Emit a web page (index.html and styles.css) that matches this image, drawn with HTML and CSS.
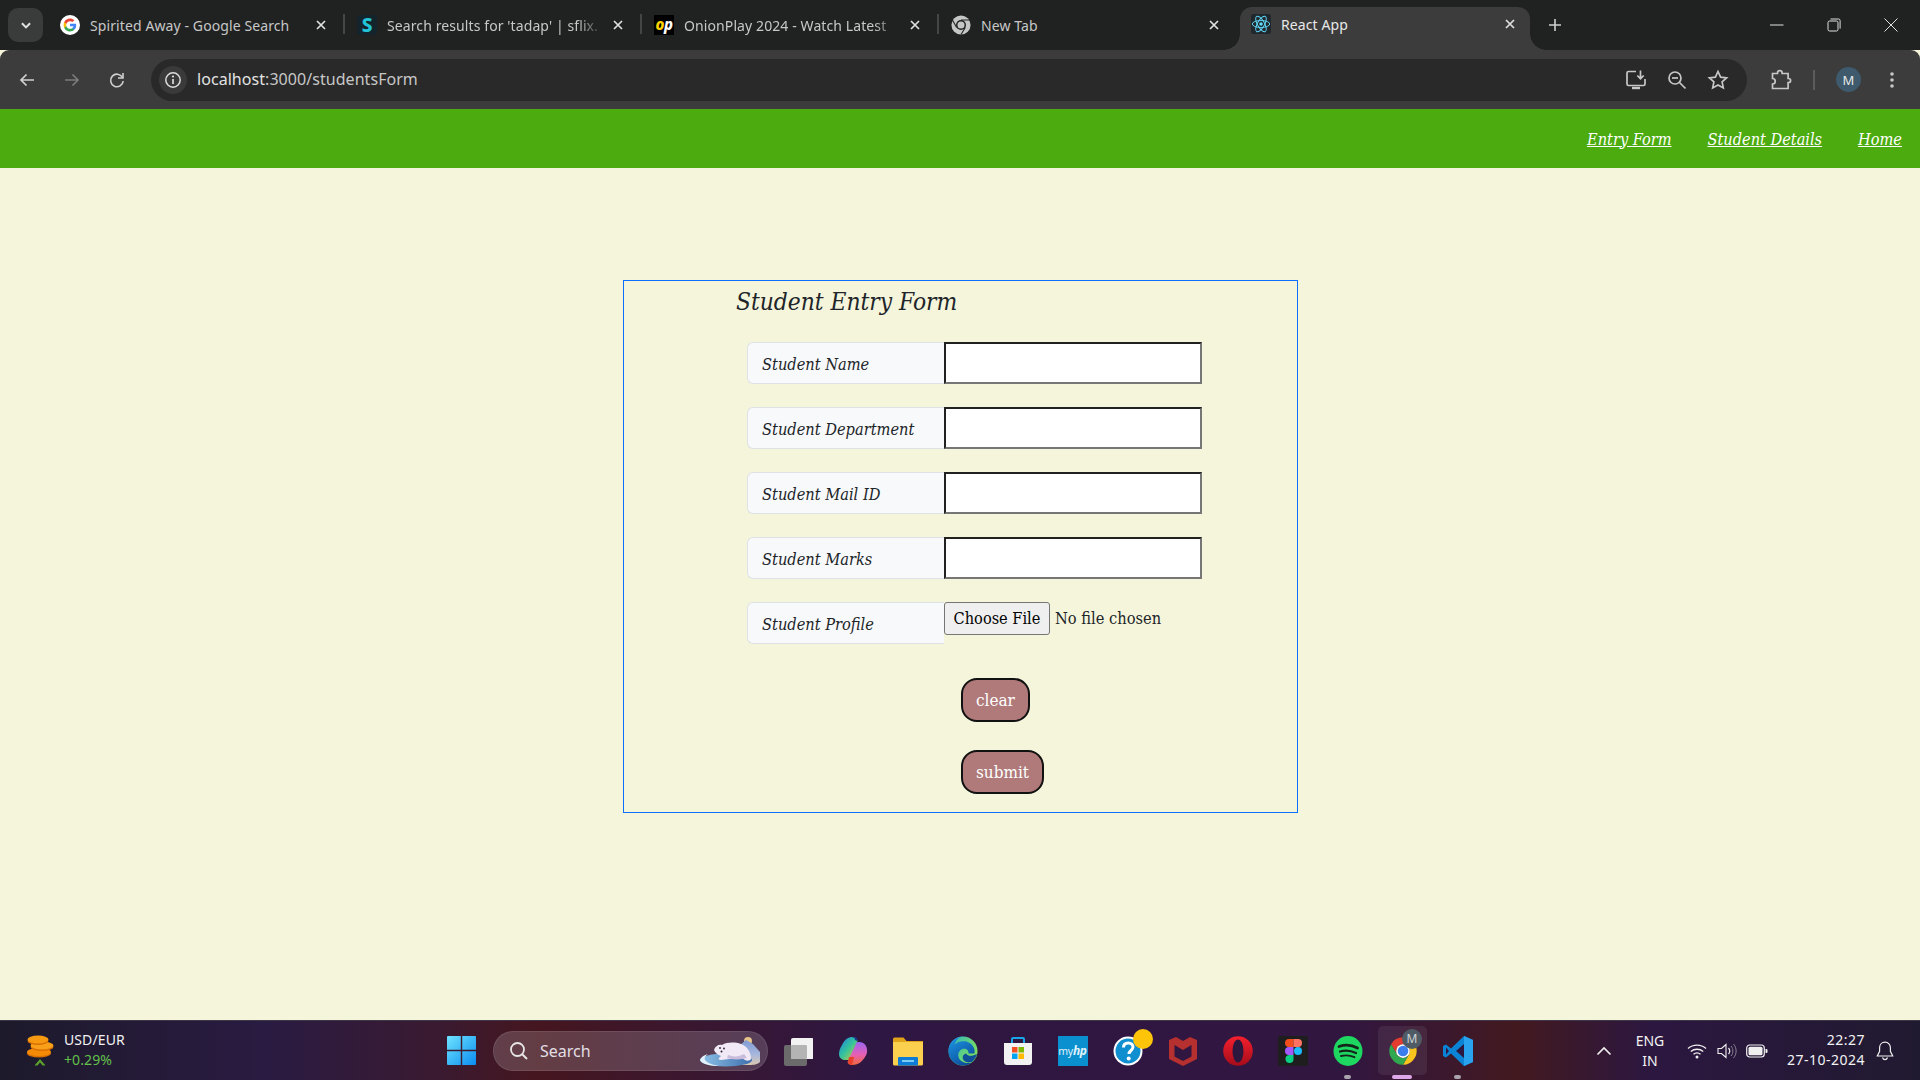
FILE: index.html
```html
<!DOCTYPE html>
<html lang="en">
<head>
<meta charset="utf-8">
<title>React App</title>
<link rel="stylesheet" href="styles.css">
</head>
<body>
<div class="screen">
  <header class="tabstrip">
    <div class="tab-menu"><svg class="ico12" viewBox="0 0 12 12"><path d="M2.500 4.500 6 8l3.500-3.500" fill="none" stroke="#e3e3e3" stroke-width="1.700"/></svg></div>
    <div class="tab tab-sep">
      <svg class="fav" viewBox="0 0 24 24"><circle cx="12" cy="12" r="12" fill="#fff"/><g transform="translate(3.600 3.600) scale(.7)"><path fill="#4285F4" d="M22.560 12.250c0-.78-.07-1.530-.2-2.250H12v4.260h5.920c-.26 1.370-1.040 2.530-2.210 3.310v2.770h3.570c2.080-1.920 3.280-4.740 3.280-8.090z"/><path fill="#34A853" d="M12 23c2.970 0 5.460-.98 7.280-2.660l-3.570-2.770c-.98.66-2.230 1.060-3.710 1.060-2.860 0-5.290-1.930-6.160-4.530H2.180v2.840C3.990 20.530 7.700 23 12 23z"/><path fill="#FBBC05" d="M5.840 14.090c-.22-.66-.35-1.360-.35-2.090s.13-1.430.35-2.090V7.070H2.180C1.430 8.550 1 10.220 1 12s.43 3.450 1.180 4.930l2.850-2.220.81-.62z"/><path fill="#EA4335" d="M12 5.380c1.620 0 3.060.56 4.210 1.640l3.150-3.150C17.450 2.090 14.970 1 12 1 7.700 1 3.990 3.470 2.180 7.070l3.660 2.840c.87-2.600 3.300-4.530 6.160-4.530z"/></g></svg>
      <span class="tab-title">Spirited Away - Google Search</span>
      <svg class="tab-x" viewBox="0 0 12 12"><path d="M2 2l8 8M10 2l-8 8"/></svg>
    </div>
    <div class="tab tab-sep">
      <span class="fav fav-s">S</span>
      <span class="tab-title tab-fade">Search results for 'tadap' | sflix.t</span>
      <svg class="tab-x" viewBox="0 0 12 12"><path d="M2 2l8 8M10 2l-8 8"/></svg>
    </div>
    <div class="tab tab-sep">
      <span class="fav fav-op">o<span class="fav-op-p">p</span></span>
      <span class="tab-title tab-fade">OnionPlay 2024 - Watch Latest</span>
      <svg class="tab-x" viewBox="0 0 12 12"><path d="M2 2l8 8M10 2l-8 8"/></svg>
    </div>
    <div class="tab tab-last">
      <svg class="fav" viewBox="0 0 48 48"><circle cx="24" cy="24" r="23" fill="#c4c7c5"/><circle cx="24" cy="24" r="12" fill="#202222"/><circle cx="24" cy="24" r="8.500" fill="#c4c7c5"/><path d="M24 12h21M13.600 30 3 11.600M34.400 30 24 47" stroke="#202222" stroke-width="2.600"/></svg>
      <span class="tab-title">New Tab</span>
      <svg class="tab-x" viewBox="0 0 12 12"><path d="M2 2l8 8M10 2l-8 8"/></svg>
    </div>
    <div class="tab tab-active">
      <svg class="fav" viewBox="0 0 24 24"><rect width="24" height="24" rx="3" fill="#20282d"/><g fill="none" stroke="#61dafb" stroke-width="1.100"><ellipse cx="12" cy="12" rx="10.500" ry="4.200"/><ellipse cx="12" cy="12" rx="10.500" ry="4.200" transform="rotate(60 12 12)"/><ellipse cx="12" cy="12" rx="10.500" ry="4.200" transform="rotate(120 12 12)"/></g><circle cx="12" cy="12" r="2.100" fill="#61dafb"/></svg>
      <span class="tab-title">React App</span>
      <svg class="tab-x" viewBox="0 0 12 12"><path d="M2 2l8 8M10 2l-8 8"/></svg>
    </div>
    <svg class="new-tab" viewBox="0 0 14 14"><path d="M7 1v12M1 7h12" fill="none" stroke="#d0d0d0" stroke-width="1.600"/></svg>
    <div class="win-controls">
      <svg class="win-btn" viewBox="0 0 14 14"><path d="M0 7h13.500" stroke="#e0e0e0" stroke-width="1"/></svg>
      <svg class="win-btn" viewBox="0 0 14 14"><rect x="1" y="3" width="10" height="10" rx="1.600" fill="none" stroke="#e0e0e0"/><path d="M3.500 1h8a1.600 1.600 0 0 1 1.600 1.600v8" fill="none" stroke="#e0e0e0"/></svg>
      <svg class="win-btn" viewBox="0 0 14 14"><path d="M.5.5l13 13M13.500.5l-13 13" stroke="#e0e0e0" stroke-width="1"/></svg>
    </div>
  </header>

  <div class="toolbar">
    <svg class="tool-btn" viewBox="0 0 18 18"><path d="M16 9H3M8.500 3.500 3 9l5.500 5.500" fill="none" stroke="#d0d0d0" stroke-width="1.700"/></svg>
    <svg class="tool-btn" viewBox="0 0 18 18"><path d="M2 9h13M9.500 3.500 15 9l-5.500 5.500" fill="none" stroke="#7b7b7b" stroke-width="1.700"/></svg>
    <svg class="tool-btn" viewBox="0 0 18 18"><path d="M14.500 6.500A6.300 6.300 0 1 0 15.200 10" fill="none" stroke="#d0d0d0" stroke-width="1.600"/><path d="M15 2v5h-5" fill="none" stroke="#d0d0d0" stroke-width="1.600"/></svg>
    <div class="omnibox">
      <span class="info-chip"><svg class="ico18" viewBox="0 0 18 18"><circle cx="9" cy="9" r="7.200" fill="none" stroke="#dcdcdc" stroke-width="1.500"/><path d="M9 8v5" stroke="#dcdcdc" stroke-width="1.700"/><circle cx="9" cy="5.500" r="1.100" fill="#dcdcdc"/></svg></span>
      <span class="url">localhost<span class="url-rest">:3000/studentsForm</span></span>
      <svg class="omni-ico" viewBox="0 0 22 22"><path d="M11 2.500H3.500A1.500 1.500 0 0 0 2 4v11a1.500 1.500 0 0 0 1.500 1.500h15A1.500 1.500 0 0 0 20 15v-5" fill="none" stroke="#c7c7c7" stroke-width="1.700"/><path d="M15.500 1.500v8M12.300 6.500l3.200 3.200 3.200-3.200" fill="none" stroke="#c7c7c7" stroke-width="1.700"/><path d="M7 19h8" stroke="#c7c7c7" stroke-width="2.400"/></svg>
      <svg class="omni-ico" viewBox="0 0 22 22"><circle cx="9" cy="9" r="6" fill="none" stroke="#c7c7c7" stroke-width="1.700"/><path d="M13.500 13.500 19.500 19.500" stroke="#c7c7c7" stroke-width="1.700"/><path d="M6 9h6" stroke="#c7c7c7" stroke-width="1.700"/></svg>
      <svg class="omni-ico" viewBox="0 0 22 22"><path d="M11 2.500l2.600 5.600 6 .7-4.500 4.100 1.200 6L11 16l-5.300 2.900 1.200-6L2.400 8.800l6-.7z" fill="none" stroke="#c7c7c7" stroke-width="1.700"/></svg>
    </div>
    <svg class="ext-ico" viewBox="0 0 22 22"><path d="M2.500 4.500h5v-.5a2.300 2.300 0 0 1 4.600 0v.5h6v5h.5a2 2 0 0 1 0 4h-.5v6H2.500v-4.500a2.700 2.700 0 0 0 0-5.500z" fill="none" stroke="#c7c7c7" stroke-width="1.700"/></svg>
    <span class="tool-sep"></span>
    <span class="avatar">M</span>
    <svg class="menu-ico" viewBox="0 0 6 18"><circle cx="3" cy="3" r="1.800" fill="#c7c7c7"/><circle cx="3" cy="9" r="1.800" fill="#c7c7c7"/><circle cx="3" cy="15" r="1.800" fill="#c7c7c7"/></svg>
  </div>

  <nav class="navbar">
    <a class="nav-link" href="#">Entry Form</a>
    <a class="nav-link" href="#">Student Details</a>
    <a class="nav-link" href="#">Home</a>
  </nav>

  <main class="page">
    <form class="entry-form">
      <h2 class="form-title">Student Entry Form</h2>
      <div class="field"><label class="field-label">Student Name</label><input class="field-input" type="text"></div>
      <div class="field"><label class="field-label">Student Department</label><input class="field-input" type="text"></div>
      <div class="field"><label class="field-label">Student Mail ID</label><input class="field-input" type="text"></div>
      <div class="field"><label class="field-label">Student Marks</label><input class="field-input" type="text"></div>
      <div class="field field-file"><label class="field-label">Student Profile</label><input class="file-input" type="file"></div>
      <div class="actions">
        <button class="action-btn" type="button">clear</button>
        <button class="action-btn" type="button">submit</button>
      </div>
    </form>
  </main>

  <footer class="taskbar">
    <div class="widget">
      <svg class="coins" viewBox="0 0 28 32">
        <ellipse cx="13" cy="18.500" rx="12" ry="4" fill="#d96f00"/><ellipse cx="13" cy="17" rx="12" ry="4" fill="#f58a07"/>
        <ellipse cx="16" cy="12" rx="11.500" ry="4" fill="#d96f00"/><ellipse cx="16" cy="10.500" rx="11.500" ry="4" fill="#f9a01b"/>
        <ellipse cx="12" cy="6" rx="10.500" ry="4" fill="#d96f00"/><ellipse cx="12" cy="4.500" rx="10.500" ry="4" fill="#f79a12"/>
        <path d="M14 24l5.500 6.500h-3L14 27.500l-2.500 3h-3z" fill="#5aa02c"/>
      </svg>
      <div class="widget-text"><span>USD/EUR</span><span class="widget-up">+0.29%</span></div>
    </div>
    <svg class="start" viewBox="0 0 29 29">
      <defs><linearGradient id="win" x1="0" y1="0" x2="1" y2="1"><stop offset="0" stop-color="#6fe3ff"/><stop offset="1" stop-color="#0a8cf0"/></linearGradient></defs>
      <path d="M1 0h12.800v13.800H0V1a1 1 0 0 1 1-1zM15.200 0H28a1 1 0 0 1 1 1v12.800H15.200zM0 15.200h13.800V29H1a1 1 0 0 1-1-1zM15.200 15.200H29V28a1 1 0 0 1-1 1H15.200z" fill="url(#win)"/>
    </svg>
    <div class="search">
      <svg class="search-ico" viewBox="0 0 20 20"><circle cx="8.500" cy="8.500" r="6.500" fill="none" stroke="#e6e6e6" stroke-width="1.800"/><path d="M13 13l5 5" stroke="#e6e6e6" stroke-width="1.900"/></svg>
      <span class="search-text">Search</span>
      <svg class="bear" viewBox="0 0 66 34">
        <defs><linearGradient id="mt" x1="0" y1="0" x2="0" y2="1"><stop offset="0" stop-color="#7f9ad6"/><stop offset=".6" stop-color="#a9b8dc"/><stop offset="1" stop-color="#dcc8b0"/></linearGradient><linearGradient id="wa" x1="0" y1="0" x2="1" y2="0"><stop offset="0" stop-color="#8fc3e8"/><stop offset="1" stop-color="#3d6fae"/></linearGradient></defs>
        <circle cx="50" cy="7" r="4" fill="#e6c48c"/>
        <path d="M30 22l7-13 5 2 6-5 7 4 7 8v10c-3 3-8 3-12 3H36z" fill="url(#mt)"/>
        <ellipse cx="28" cy="26" rx="26" ry="6.500" fill="url(#wa)"/>
        <path d="M2 26c1-3 4-5 8-6-3 2-4 4-3 6 2 3 8 5 14 6-9 0-17-2-19-6z" fill="#e3f1fa"/>
        <path d="M16 16c1-4 5-6 8-5 5-3 13-3 19-1 6 2 10 8 10 15-1 2-4 2-6 1l-3-2c-4 1-9 1-13 1l-8 1c-2 0-3-1-2-2l2-2c-3-1-6-3-7-6z" fill="#f1e9f5"/>
        <path d="M30 21c5 2 11 2 16-1l3 4-5 1c-6 1-12 0-15-1z" fill="#c9bcdc"/>
        <circle cx="22" cy="14" r=".9" fill="#2a2230"/><circle cx="26" cy="14.500" r=".9" fill="#2a2230"/><circle cx="23.500" cy="17.500" r="1" fill="#2a2230"/>
      </svg>
    </div>
    <div class="apps">
      <div class="app"><svg class="app-ico" viewBox="0 0 30 30"><rect x="1" y="9" width="23" height="21" rx="2" fill="#6b6b6b"/><rect x="8" y="2" width="23" height="21" rx="2" fill="#f2f2f2"/><rect x="8" y="9" width="16" height="14" rx="1" fill="#b4b4b4"/></svg></div>
      <div class="app"><svg class="app-ico" viewBox="0 0 30 30">
        <defs>
          <linearGradient id="cp1" x1="0" y1="0" x2="1" y2="1"><stop offset="0" stop-color="#1b7fe8"/><stop offset=".5" stop-color="#35c49a"/><stop offset="1" stop-color="#f2c72e"/></linearGradient>
          <linearGradient id="cp2" x1="0" y1="0" x2="0" y2="1"><stop offset="0" stop-color="#9a66f2"/><stop offset=".55" stop-color="#e65fb4"/><stop offset="1" stop-color="#f0683a"/></linearGradient>
        </defs>
        <path d="M14 1c3.500 0 5 1.500 5.500 4l-6 17-3.500 2H7c-3.500 0-6-2.500-6-6 0-3 1-6 3-9C6 5 9 1 14 1z" fill="url(#cp1)"/>
        <path d="M20 6c4 0 7 1 8.500 5 1 3 1 7-1.500 10-3 5-7 8-13 8-2.500 0-4-1-4.500-3l8-17c.5-2 1-3 2.500-3z" fill="url(#cp2)"/>
        <path d="M11 21h5l-2 8c-2 0-3.500-1-4-3z" fill="#e8402a"/>
        <path d="M19 5c1-2-1-4-5-4 2 .5 3 1.500 3 3z" fill="#123a9c"/>
      </svg></div>
      <div class="app"><svg class="app-ico" viewBox="0 0 30 30"><path d="M0 3a1.500 1.500 0 0 1 1.500-1.500h9l3 3.500H30V10H0z" fill="#e0a31a"/><path d="M0 6h30v22a1.500 1.500 0 0 1-1.500 1.500h-27A1.500 1.500 0 0 1 0 28z" fill="#fcd04f"/><rect x="5" y="21" width="20" height="8.500" rx="1" fill="#0d7cd6"/><rect x="9" y="24" width="12" height="2" fill="#7ccbf5"/></svg></div>
      <div class="app"><svg class="app-ico" viewBox="0 0 30 30">
        <defs><linearGradient id="edgeA" x1="0" y1="0" x2="1" y2=".6"><stop offset="0" stop-color="#2cb4c4"/><stop offset="1" stop-color="#7fe05a"/></linearGradient><linearGradient id="edgeB" x1="0" y1="0" x2=".6" y2="1"><stop offset="0" stop-color="#1d9ae6"/><stop offset="1" stop-color="#0c4f9e"/></linearGradient></defs>
        <circle cx="15" cy="15" r="14.500" fill="url(#edgeA)"/>
        <path d="M15 .5C6.500.5.500 7 .5 15c0 8 6.500 14.500 14.500 14.500 3.500 0 6.500-1 9-3-5 1.500-12 0-13.500-5.500-1-4 1-7 4-8 3-1 6.500 1 6 4.500h6c1-5-2-10-8-12-4-1-9 0-12 3 2-5 5-8 8.500-8.500z" fill="url(#edgeB)"/>
        <path d="M29 18c-.5 2-2 5-5 8-4 1-8 0-9-3-1-3 1-5 3-5.500 2 3 6 3 11 .5z" fill="#0f4f9a"/>
      </svg></div>
      <div class="app"><svg class="app-ico" viewBox="0 0 30 30"><path d="M9 7V3a1 1 0 0 1 1-1h10a1 1 0 0 1 1 1v4" fill="none" stroke="#1aa5e8" stroke-width="2"/><path d="M1 7h28v19a3 3 0 0 1-3 3H4a3 3 0 0 1-3-3z" fill="#f2f2f2"/><rect x="9" y="11" width="5.500" height="5.500" fill="#f25022"/><rect x="15.500" y="11" width="5.500" height="5.500" fill="#7fba00"/><rect x="9" y="17.500" width="5.500" height="5.500" fill="#00a4ef"/><rect x="15.500" y="17.500" width="5.500" height="5.500" fill="#ffb900"/></svg></div>
      <div class="app"><span class="myhp">my<i class="myhp-hp">hp</i></span></div>
      <div class="app"><svg class="app-ico" viewBox="0 0 30 30"><circle cx="15" cy="15" r="14.500" fill="#fff"/><circle cx="15" cy="15" r="12.500" fill="#0f8fd0"/><path d="M10.500 11.500c0-3 2-4.500 4.800-4.500s4.700 1.700 4.700 4c0 3.500-4 3.500-4 7" fill="none" stroke="#fff" stroke-width="3"/><circle cx="15.700" cy="22.500" r="2" fill="#fff"/></svg><span class="badge-dot"></span></div>
      <div class="app"><svg class="app-ico" viewBox="0 0 30 30"><path d="M1 4l7-3 7 4 7-4 7 3v19l-14 7-14-7zM6.500 9v11.500l8.500 4.500 8.500-4.500V9L15 14z" fill="#b5302e" fill-rule="evenodd"/></svg></div>
      <div class="app"><svg class="app-ico" viewBox="0 0 30 30"><defs><linearGradient id="op" x1="0" y1="0" x2="0" y2="1"><stop offset="0" stop-color="#f5202e"/><stop offset="1" stop-color="#a50c1a"/></linearGradient></defs><circle cx="15" cy="15" r="14.800" fill="url(#op)"/><ellipse cx="15" cy="15" rx="5.500" ry="11.500" fill="#2c173f"/></svg></div>
      <div class="app"><svg class="app-ico" viewBox="0 0 30 30"><rect width="30" height="30" rx="2" fill="#1e1e1e"/><path d="M11 3h4.500v8H11a4 4 0 0 1 0-8z" fill="#f24e1e"/><path d="M15.500 3H20a4 4 0 0 1 0 8h-4.500z" fill="#ff7262"/><circle cx="11" cy="15" r="4" fill="#a259ff"/><rect x="11" y="11" width="4.500" height="8" fill="#a259ff"/><circle cx="20" cy="15" r="4" fill="#1abcfe"/><path d="M11 19h4.500v4a4 4 0 1 1-4.500-4z" fill="#0acf83"/></svg></div>
      <div class="app"><svg class="app-ico" viewBox="0 0 30 30"><ellipse cx="15" cy="15" rx="14.500" ry="15" fill="#1ed760"/><g fill="none" stroke="#14251b" stroke-linecap="round"><path d="M6 10.500c6-2 13-1.500 18.500 1.500" stroke-width="2.800"/><path d="M7 15.500c5-1.500 11-1 16 1.500" stroke-width="2.300"/><path d="M8 20c4-1 9-.8 13.500 1.200" stroke-width="1.900"/></g></svg><span class="run-dot"></span></div>
      <div class="app app-active"><svg class="app-ico" viewBox="0 0 48 48"><path d="M24 2A22 22 0 0 0 5 13l9.500 16.500A11 11 0 0 1 24 13h19A22 22 0 0 0 24 2z" fill="#e33b2e"/><path d="M43 13H24a11 11 0 0 1 9.500 16.500L24 46a22 22 0 0 0 19-33z" fill="#f9c31d"/><path d="M5 13a22 22 0 0 0 19 33l9.500-16.500a11 11 0 0 1-19 0z" fill="#2fa84f"/><circle cx="24" cy="24" r="11" fill="#fff"/><circle cx="24" cy="24" r="8.500" fill="#3b7ded"/></svg><span class="profile-badge">M</span><span class="run-dot run-active"></span></div>
      <div class="app"><svg class="app-ico" viewBox="0 0 30 30"><path d="M21 0l9 4v22l-9 4L8 17.500 3 21.500 0 20V10l3-1.500 5 4z" fill="#0b84d6"/><path d="M21 0l9 4v22l-9 4z" fill="#2aa3ef"/><path d="M21 8l-8 7 8 7z" fill="#2c173f"/><path d="M3 11.500 6 15l-3 3.500z" fill="#2c173f"/></svg><span class="run-dot"></span></div>
    </div>
    <div class="tray">
      <svg class="tray-chevron" viewBox="0 0 16 10"><path d="M1.500 8.500 8 2l6.500 6.500" fill="none" stroke="#f0f0f0" stroke-width="1.600"/></svg>
      <div class="tray-lang"><span>ENG</span><span>IN</span></div>
      <svg class="tray-wifi" viewBox="0 0 20 16"><g fill="none" stroke="#f0f0f0" stroke-width="1.300"><path d="M1 5.500c5-4.500 13-4.500 18 0"/><path d="M3.800 8.500c3.500-3 9-3 12.400 0"/><path d="M6.500 11.300c2-1.700 5-1.700 7 0"/></g><circle cx="10" cy="14" r="1.500" fill="#f0f0f0"/></svg>
      <svg class="tray-vol" viewBox="0 0 20 16"><path d="M1 5.500h3.500L9 1.500v13l-4.500-4H1z" fill="none" stroke="#f0f0f0" stroke-width="1.100"/><path d="M11.500 5c1.500 1.800 1.500 4.200 0 6" fill="none" stroke="#f0f0f0" stroke-width="1.200"/><path d="M14 3c2.500 3 2.500 7 0 10M16.500 1c3.500 4 3.500 10 0 14" fill="none" stroke="#8a8296" stroke-width="1"/></svg>
      <svg class="tray-batt" viewBox="0 0 22 14"><rect x=".7" y="1" width="17.600" height="12" rx="3" fill="none" stroke="#f0f0f0" stroke-width="1.200"/><rect x="2.500" y="2.800" width="14" height="8.400" rx="1.500" fill="#f0f0f0"/><path d="M19.500 5h1a1 1 0 0 1 1 1v2a1 1 0 0 1-1 1h-1z" fill="#f0f0f0"/></svg>
      <div class="tray-clock"><span>22:27</span><span>27-10-2024</span></div>
      <svg class="tray-bell" viewBox="0 0 18 20"><path d="M9 1.200c-3.300 0-5.400 2.500-5.400 5.600v3.500L1.300 15h15.400l-2.300-4.700V6.800c0-3.100-2.100-5.600-5.400-5.600z" fill="none" stroke="#f0f0f0" stroke-width="1.200"/><path d="M6.500 16.500c.5 1.500 1.400 2.200 2.500 2.200s2-.7 2.500-2.200" fill="none" stroke="#f0f0f0" stroke-width="1.200"/></svg>
    </div>
  </footer>
</div>
</body>
</html>
```
FILE: styles.css
```css
* { box-sizing: border-box; }
html, body { margin: 0; height: 100%; overflow: hidden; }
body { font-family: "Noto Sans", "Open Sans", sans-serif; background: #f5f5dc; }
.screen { display: flex; flex-direction: column; height: 1080px; width: 1920px; }

/* tab strip */
.tabstrip { display: flex; align-items: flex-start; height: 50px; background: #202222; padding-left: 8px; flex: none; }
.tab-menu { width: 35px; height: 34px; margin-top: 8px; margin-right: 5px; border-radius: 10px; background: #3a3b3b; display: flex; align-items: center; justify-content: center; }
.ico12 { width: 14px; height: 14px; }
.tab { position: relative; display: flex; align-items: center; width: 297px; height: 34px; margin-top: 8px; padding: 0 18px 0 12px; color: #c7c7c7; font-size: 14px; letter-spacing: .1px; }
.tab-sep::after { content: ""; position: absolute; right: 0; top: 6px; width: 2px; height: 20px; background: #444646; }
.tab-last { width: 299px; }
.tab-active { width: 290px; height: 43px; margin-top: 7px; margin-left: 2px; padding: 0 14px 9px 11px; background: #3c3c3c; border-radius: 12px 12px 0 0; color: #e8e8e8; }
.tab-active::before, .tab-active::after { content: ""; position: absolute; bottom: 0; width: 16px; height: 16px; }
.tab-active::before { left: -16px; background: radial-gradient(circle at 0 0, transparent 15.500px, #3c3c3c 16px); }
.tab-active::after { right: -16px; background: radial-gradient(circle at 100% 0, transparent 15.500px, #3c3c3c 16px); }
.fav { flex: none; width: 20px; height: 20px; margin-right: 10px; }
.fav-s { background: #14242c; color: #22c3d6; border-radius: 3px; font: 800 19px/20px "Noto Sans", sans-serif; text-align: center; letter-spacing: 0; }
.fav-op { background: #000; color: #ffd400; font: italic 800 15px/18px "Noto Sans", sans-serif; text-align: center; letter-spacing: -.5px; }
.fav-op-p { color: #fff; }
.tab-title { flex: 1; min-width: 0; white-space: nowrap; }
.tab-fade { -webkit-mask-image: linear-gradient(to right, #000 90%, rgba(0,0,0,.2) 100%); mask-image: linear-gradient(to right, #000 90%, rgba(0,0,0,.2) 100%); }
.tab-x { flex: none; width: 12px; height: 12px; margin-left: 14px; fill: none; stroke: #e0e0e0; stroke-width: 1.700; }
.new-tab { flex: none; width: 14px; height: 14px; margin: 18px 0 0 18px; }
.win-controls { display: flex; gap: 43px; margin-left: auto; margin-top: 18px; padding-right: 22px; }
.win-btn { width: 14px; height: 14px; }

/* toolbar */
.toolbar { display: flex; align-items: center; height: 59px; flex: none; padding: 0 21px 0 18px; background: #3c3c3c; border-radius: 9px 9px 0 0; }
.tool-btn { flex: none; width: 18px; height: 18px; margin-right: 27px; }
.omnibox { display: flex; align-items: center; flex: none; width: 1596px; height: 42px; margin-left: -2px; margin-right: 23px; padding: 0 18px 0 8px; background: #292929; border-radius: 21px; }
.info-chip { display: flex; align-items: center; justify-content: center; width: 28px; height: 28px; margin-right: 10px; border-radius: 50%; background: #3a3a3a; }
.ico18 { width: 18px; height: 18px; }
.url { flex: 1; padding-bottom: 1px; color: #e3e3e3; font-size: 16px; letter-spacing: .05px; }
.url-rest { color: #c7c7c7; }
.omni-ico { flex: none; width: 22px; height: 22px; margin-left: 19px; }
.ext-ico { flex: none; width: 22px; height: 22px; }
.tool-sep { flex: none; width: 2px; height: 20px; margin: 0 21px; background: #5c5c5c; }
.avatar { flex: none; display: flex; align-items: center; justify-content: center; width: 25px; height: 25px; border-radius: 50%; background: #3f5a6c; color: #e8e8e8; font-size: 13px; }
.menu-ico { flex: none; width: 6px; height: 18px; margin-left: 28px; }

/* green nav */
.navbar { display: flex; align-items: center; justify-content: flex-end; gap: 36px; height: 59px; flex: none; padding: 1px 18px 0 0; background: #4cab0e; }
.nav-link { color: #fff; font: italic 16.200px "DejaVu Serif Condensed", "Liberation Serif", serif; text-decoration: underline; }

/* form */
.page { flex: 1; min-height: 0; padding-top: 112px; background: #f5f5dc; }
.entry-form { width: 675px; margin-left: 623px; padding-bottom: 18px; border: 1px solid #0d6efd; font-family: "DejaVu Serif Condensed", "Liberation Serif", serif; color: #212529; }
.form-title { margin: 0 0 21px 112px; padding-top: 1px; font-size: 24.300px; line-height: 40px; height: 40px; font-weight: 400; font-style: italic; }
.field { display: flex; margin: 0 0 23px 123px; }
.field-file { margin-bottom: 34px; }
.field-label { display: flex; align-items: center; width: 197px; height: 42px; padding: 2px 0 0 14px; font-size: 16.250px; font-style: italic; background: #f8f9fa; border: 1px solid #dee2e6; border-right: 0; border-radius: 6px 0 0 6px; }
.field-input { width: 258px; height: 42px; background: #fff; border-style: solid; border-width: 2px; border-color: #212121 #767676 #767676 #212121; padding: 0 4px; }
.file-input { width: 258px; font: 16.300px "DejaVu Serif Condensed", "Liberation Serif", serif; color: #212529; }
.file-input::file-selector-button { height: 33px; width: 106px; margin-right: 5px; padding: 0; background: #efefef; border: 1px solid #767676; border-radius: 3px; font: 16.200px "DejaVu Serif Condensed", "Liberation Serif", serif; color: #000; }
.actions { display: flex; flex-direction: column; align-items: flex-start; gap: 28px; margin-left: 337px; }
.action-btn { height: 44px; padding: 0 13px; background: #b07a7a; border: 2px solid #111; border-radius: 16px; color: #fff; font: 17px "DejaVu Serif Condensed", "Liberation Serif", serif; }

/* taskbar */
.taskbar { display: flex; align-items: center; height: 60px; flex: none; border-top: 1px solid #3d3646; color: #f2f2f2; background: linear-gradient(90deg, #1d1a2b 0%, #2a1b42 14%, #3a1a30 23%, #45161f 28%, #2e1742 45%, #311640 70%, #42191f 79%, #2c1740 86%, #201a30 100%); }
.widget { display: flex; align-items: center; flex: none; width: 447px; padding-left: 26px; }
.coins { width: 28px; height: 32px; margin-right: 10px; }
.widget-text { display: flex; flex-direction: column; padding-bottom: 2px; font-size: 14px; line-height: 20px; letter-spacing: .1px; }
.widget-up { color: #63c04a; }
.start { flex: none; width: 29px; height: 29px; margin-right: 17px; }
.search { display: flex; align-items: center; flex: none; width: 275px; height: 40px; padding: 0 3px 0 15px; background: rgba(255,255,255,.17); border: 1px solid rgba(255,255,255,.09); border-radius: 20px; }
.search-ico { width: 20px; height: 20px; margin-right: 11px; }
.search-text { flex: 1; font-size: 16px; color: #e2dfe4; }
.bear { width: 66px; height: 34px; }
.apps { display: flex; flex: none; margin-left: 2px; }
.app { position: relative; display: flex; align-items: center; justify-content: center; width: 55px; height: 50px; }
.app-ico { width: 30px; height: 30px; }
.app-active::before { content: ""; position: absolute; left: 3px; top: 0; width: 49px; height: 49px; border-radius: 5px; background: rgba(255,255,255,.07); }
.app-active .app-ico { position: relative; }
.myhp { display: block; width: 30px; height: 30px; background: #0a8fcf; color: #e2f3fb; font-size: 10.500px; line-height: 30px; text-align: center; letter-spacing: -.3px; }
.myhp-hp { font-size: 12px; font-weight: 700; }
.badge-dot { position: absolute; left: 33px; top: 3px; width: 20px; height: 20px; border-radius: 50%; background: #fdc40a; }
.profile-badge { position: absolute; left: 27px; top: 3px; width: 20px; height: 20px; border-radius: 50%; background: #4f5c66; color: #cfd3d6; font-size: 12px; line-height: 20px; text-align: center; }
.run-dot { position: absolute; left: 24px; bottom: -3px; width: 7px; height: 4px; border-radius: 2px; background: #a8a3ad; }
.run-active { left: 17px; width: 20px; background: #dfa8ea; }
.tray { display: flex; align-items: center; margin-left: auto; padding-right: 24px; }
.tray-chevron { width: 16px; height: 10px; margin-right: 23px; }
.tray-lang { display: flex; flex-direction: column; align-items: center; width: 30px; font-size: 14px; line-height: 20px; margin-right: 22px; }
.tray-wifi { width: 20px; height: 16px; margin-right: 10px; }
.tray-vol { width: 20px; height: 16px; margin-right: 9px; }
.tray-batt { width: 22px; height: 14px; margin-right: 17px; }
.tray-clock { display: flex; flex-direction: column; align-items: flex-end; width: 80px; padding-bottom: 2px; font-size: 14px; line-height: 20px; letter-spacing: .5px; margin-right: 9px; }
.tray-bell { width: 18px; height: 20px; margin-left: 2px; margin-right: 2px; }
```
